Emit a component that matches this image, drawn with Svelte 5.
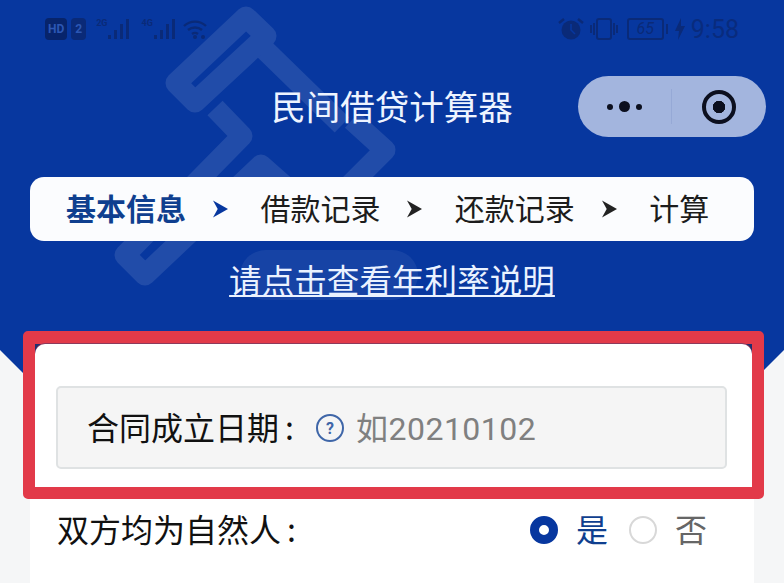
<script lang="ts">
  const steps = [
    { label: "基本信息", active: true },
    { label: "借款记录", active: false },
    { label: "还款记录", active: false },
    { label: "计算", active: false },
  ];
</script>

<div class="page">
  <header class="hero">
    <svg class="watermark" viewBox="0 0 300 300" aria-hidden="true">
      <g fill="none" stroke="#fff" stroke-width="21" stroke-linejoin="round">
        <path d="M116 17 L136 36 L65 102 L46 83 Z" />
        <path d="M135 50 L212 125" />
        <path d="M222 120 L255 150 L190 215" />
        <path d="M85 108 L112 136 L-5 255 L15 275 L131 165 L165 195" />
      </g>
      <rect x="110" y="250" width="178" height="50" rx="26" fill="#fff" fill-opacity="0.6" />
    </svg>

    <div class="status">
      <div class="status-left">
        <span class="hd">HD</span><span class="sim">2</span>
        <span class="net"><i>2G</i><svg viewBox="0 0 24 22" width="24" height="22"><path d="M1 17h3v4H1zM7 12h3v9H7zM13 6h3v15h-3zM19 1h3v20h-3z" /></svg></span>
        <span class="net"><i>4G</i><svg viewBox="0 0 24 22" width="24" height="22"><path d="M1 17h3v4H1zM7 12h3v9H7zM13 6h3v15h-3zM19 1h3v20h-3z" /></svg></span>
        <svg class="wifi" viewBox="0 0 24 20" width="24" height="20"><path d="M1 7a16 16 0 0 1 22 0M5 11a11 11 0 0 1 14 0M9 15a5 5 0 0 1 6 0" fill="none" stroke="currentColor" stroke-width="2.4" /><circle cx="12" cy="18" r="2" fill="currentColor" /><circle cx="20" cy="18" r="2" fill="currentColor" /></svg>
      </div>
      <div class="status-right">
        <svg viewBox="0 0 26 24" width="26" height="24"><circle cx="13" cy="13" r="9.5" fill="currentColor" /><path d="M1 6l5-4M25 6l-5-4" stroke="currentColor" stroke-width="2.5" /><path d="M13 7v6l4 4" fill="none" stroke="#07379f" stroke-width="1.6" /></svg>
        <svg viewBox="0 0 30 24" width="30" height="24"><rect x="8" y="2" width="14" height="20" rx="2" fill="none" stroke="currentColor" stroke-width="2" /><path d="M2 8v8M5 6v12M25 6v12M28 8v8" stroke="currentColor" stroke-width="2" /></svg>
        <span class="battery">65</span><span class="nub"></span>
        <svg class="bolt" viewBox="0 0 10 22" width="10" height="22"><path d="M6 0L0 13h4l-1 9 7-14H6z" fill="currentColor" /></svg>
        <span class="time">9:58</span>
      </div>
    </div>

    <div class="titlebar">
      <h1>民间借贷计算器</h1>
      <div class="capsule">
        <div class="dots"><b></b><b class="big"></b><b></b></div>
        <div class="target"><span></span></div>
      </div>
    </div>

    <nav class="steps">
      {#each steps as step, i}
        <span class:active={step.active}>{step.label}</span>
        {#if i < steps.length - 1}
          <svg class="arrow" class:active={step.active} viewBox="0 0 16 18" width="15" height="18"><path d="M0 0L16 9L0 18L5 9Z" /></svg>
        {/if}
      {/each}
    </nav>

    <a class="link" href="#rate">请点击查看年利率说明</a>
  </header>

  <main class="sheet">
    <div class="highlight">
      <div class="card">
        <div class="field">
          <span class="label">合同成立日期<em>:</em></span>
          <span class="help">?</span>
          <span class="placeholder">如20210102</span>
        </div>
      </div>
    </div>

    <div class="row">
      <span class="label">双方均为自然人<em>:</em></span>
      <div class="radios">
        <span class="radio on"></span><span class="yes">是</span>
        <span class="radio"></span><span class="no">否</span>
      </div>
    </div>
  </main>
</div>

<style>
  :global(body) {
    margin: 0;
    background: #f5f6f7;
  }
  .page {
    position: relative;
    width: 784px;
    height: 583px;
    overflow: hidden;
    background: #f5f6f7;
    font-family: "Noto Sans CJK SC", "Noto Sans", sans-serif;
    color: #1c1c1c;
  }
  .hero {
    position: relative;
    height: 391px;
    box-sizing: border-box;
    padding: 13px 30px 0;
    background: #07379f;
    clip-path: polygon(0 0, 100% 0, 100% 350px, 754px 380px, 30px 380px, 0 350px);
    overflow: hidden;
  }
  .watermark {
    position: absolute;
    left: 130px;
    top: 0;
    width: 300px;
    height: 300px;
    overflow: visible;
    opacity: 0.1;
  }
  .status {
    position: relative;
    display: flex;
    justify-content: space-between;
    align-items: center;
    height: 32px;
    padding: 0 15px;
    color: #0a2a78;
  }
  .status-left,
  .status-right {
    display: flex;
    align-items: center;
    gap: 6px;
  }
  .status-right {
    gap: 5px;
  }
  .hd {
    padding: 5px 3px;
    border-radius: 4px;
    background: #07246b;
    color: #2c57b4;
    font: 700 12px/12px "Roboto", sans-serif;
  }
  .sim {
    margin-left: -2px;
    padding: 5px 4px;
    border-radius: 4px;
    background: #0a2a78;
    color: #2c57b4;
    font: 700 12px/12px "Roboto", sans-serif;
  }
  .net {
    display: flex;
    align-items: flex-end;
    margin-left: 4px;
  }
  .net i {
    align-self: flex-start;
    font: 700 9px "Roboto", sans-serif;
  }
  .net svg {
    fill: currentColor;
  }
  .battery {
    width: 33px;
    height: 18px;
    margin-left: 3px;
    border: 2px solid currentColor;
    border-radius: 3px;
    text-align: center;
    font: italic 16px/18px "Roboto", sans-serif;
  }
  .nub {
    width: 2px;
    height: 10px;
    margin-left: -3px;
    background: currentColor;
  }
  .bolt {
    margin: 0 1px 0 2px;
  }
  .time {
    font: 25px "Roboto", sans-serif;
    opacity: 0.85;
  }
  .titlebar {
    position: relative;
    display: flex;
    justify-content: center;
    align-items: center;
    height: 61px;
    margin-top: 31px;
    margin-bottom: 40px;
  }
  h1 {
    margin: 0 0 3px;
    font-size: 34.5px;
    font-weight: 400;
    color: #eef4ff;
  }
  .capsule {
    position: absolute;
    right: -12px;
    top: 0;
    display: flex;
    width: 188px;
    height: 61px;
    border-radius: 31px;
    background: #a3b5de;
  }
  .dots {
    display: flex;
    flex: 1;
    align-items: center;
    justify-content: center;
    gap: 6px;
    margin: 13px 0;
    border-right: 1px solid #96a9d6;
  }
  .dots b {
    width: 6px;
    height: 6px;
    border-radius: 50%;
    background: #0c0f1e;
  }
  .dots .big {
    width: 11px;
    height: 11px;
  }
  .target {
    display: flex;
    width: 94px;
    align-items: center;
    justify-content: center;
  }
  .target span {
    width: 34px;
    height: 34px;
    box-sizing: border-box;
    border: 4px solid #0c0f1e;
    border-radius: 50%;
    background: radial-gradient(circle, #0c0f1e 0 6px, transparent 6.5px);
  }
  .steps {
    position: relative;
    display: flex;
    align-items: center;
    height: 64px;
    padding-left: 36px;
    border-radius: 14px;
    background: #fbfcfe;
    font-size: 30px;
    white-space: nowrap;
  }
  .steps span {
    margin-bottom: 4px;
  }
  .steps span.active {
    font-weight: 700;
    color: #0f3f8f;
  }
  .arrow {
    flex: none;
    margin: 0 32.4px 0 27px;
    fill: #222;
  }
  .arrow.active {
    fill: #07379f;
  }
  .link {
    position: relative;
    display: block;
    width: fit-content;
    margin: 13px auto 0;
    font-size: 32.6px;
    line-height: 50px;
    color: #eaf2ff;
    text-decoration: underline;
    text-decoration-thickness: 2px;
    text-underline-offset: 2px;
  }
  .sheet {
    position: absolute;
    left: 30px;
    right: 30px;
    top: 344px;
    bottom: 0;
    background: #fff;
  }
  .highlight {
    margin: -13px -10px 0 -7px;
    border: 12px solid #e23a49;
    border-top-width: 13px;
    border-radius: 5px;
    background: #20306f;
  }
  .card {
    padding: 42px 25px 18px 21px;
    background: #fff;
    border-radius: 10px 10px 0 0;
    box-shadow: 0 -1px 0 #8c3a5c;
  }
  .field {
    display: flex;
    align-items: center;
    height: 83px;
    box-sizing: border-box;
    padding-left: 29px;
    border: 2px solid #dfe2e3;
    border-radius: 5px;
    background: #f5f5f5;
  }
  .label {
    margin-bottom: 4px;
    font-size: 32px;
    color: #111;
  }
  .label em {
    margin-left: 6px;
    font-style: normal;
  }
  .help {
    display: flex;
    align-items: center;
    justify-content: center;
    width: 28px;
    height: 28px;
    box-sizing: border-box;
    margin: 1px 12px 0 22px;
    border: 2px solid #3f66a8;
    border-radius: 50%;
    font: 700 16px "Roboto", sans-serif;
    color: #3f66a8;
  }
  .placeholder {
    margin-bottom: 4px;
    font: 32px "Roboto", "Noto Sans CJK SC", sans-serif;
    letter-spacing: 0.5px;
    color: #808080;
  }
  .row {
    display: flex;
    align-items: center;
    justify-content: space-between;
    padding: 6px 47px 0 27px;
  }
  .radios {
    display: flex;
    align-items: center;
    font-size: 32px;
  }
  .radio {
    width: 28px;
    height: 28px;
    box-sizing: border-box;
    border: 2px solid #d8d8d8;
    border-radius: 50%;
    background: #fff;
  }
  .radio.on {
    border: 9px solid #07379f;
  }
  .yes {
    margin: 0 21px 4px 18px;
    color: #0f3f8f;
  }
  .no {
    margin: 0 0 4px 18px;
    color: #666;
  }
</style>
